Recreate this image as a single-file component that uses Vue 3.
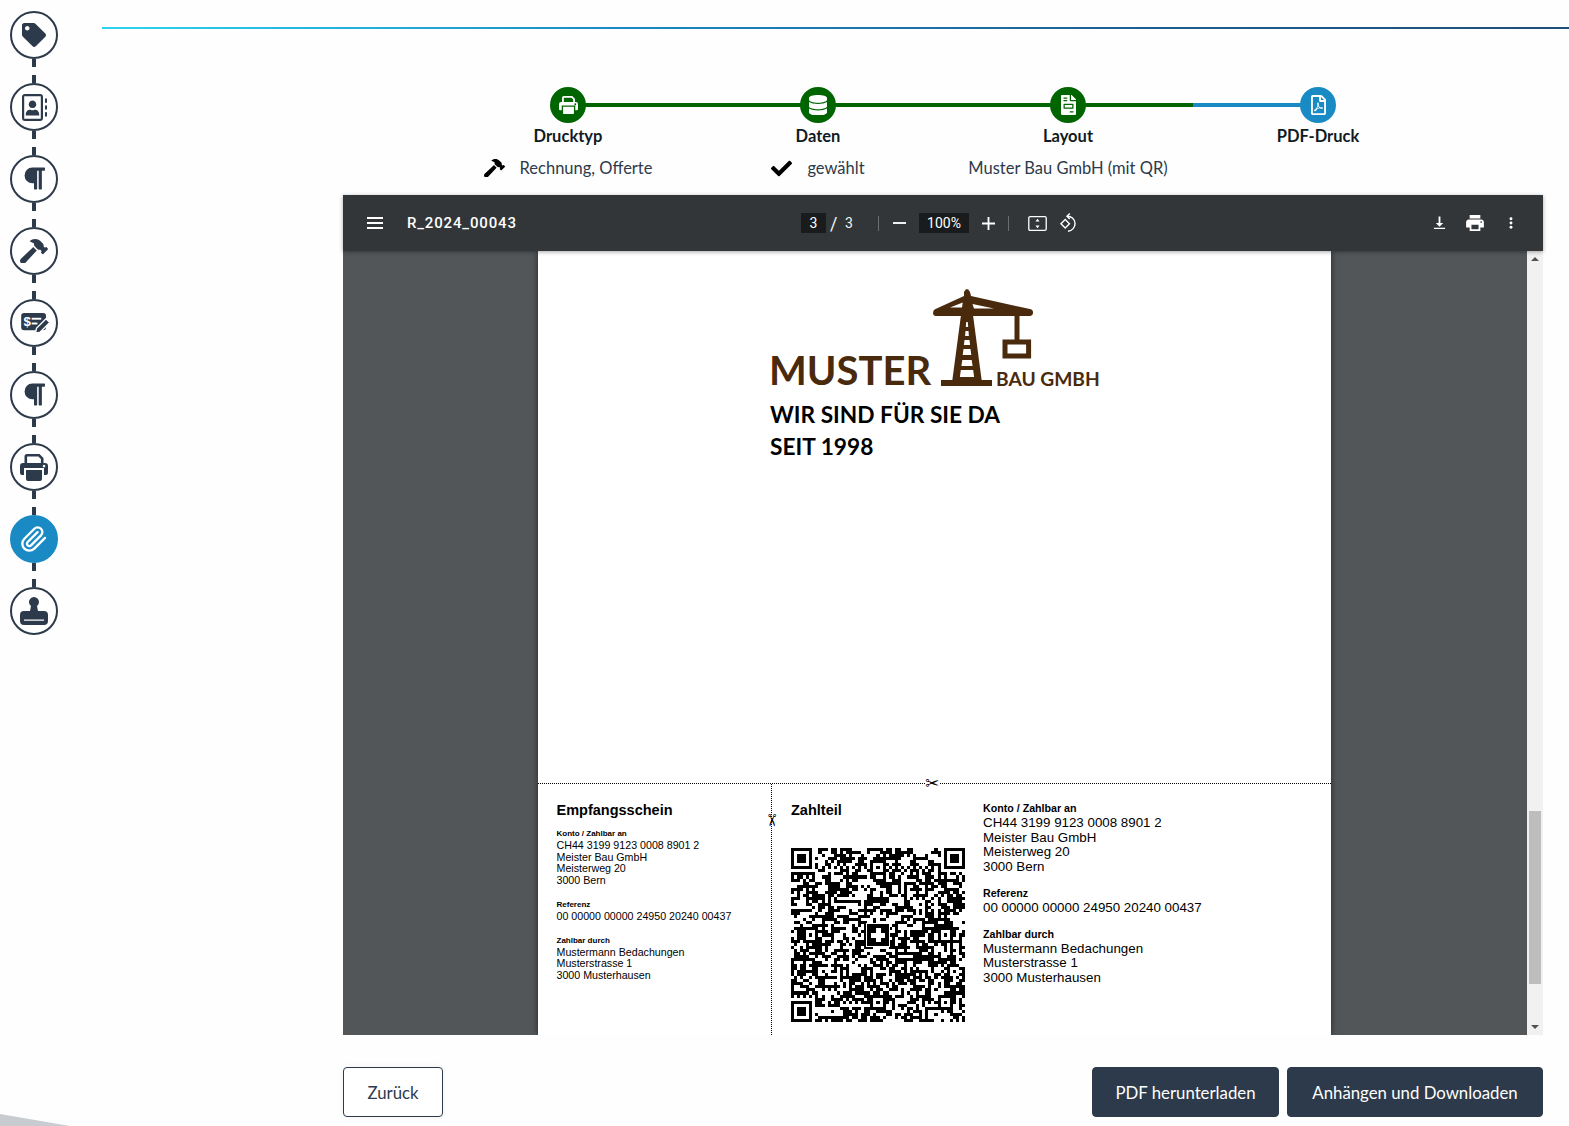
<script setup>
const icons = {
  tag: { vb: '0 0 512 512', w: 24, d: 'M0 252.118V48C0 21.49 21.49 0 48 0h204.118a48 48 0 0 1 33.941 14.059l211.882 211.882c18.745 18.745 18.745 49.137 0 67.882L293.823 497.941c-18.745 18.745-49.137 18.745-67.882 0L14.059 286.059A48 48 0 0 1 0 252.118zM112 64c-26.51 0-48 21.49-48 48s21.49 48 48 48 48-21.49 48-48-21.49-48-48-48z' },
  book: { vb: '0 0 25 27', w: 25, d: 'M3 0h15a3 3 0 0 1 3 3v21a3 3 0 0 1-3 3H3a3 3 0 0 1-3-3V3a3 3 0 0 1 3-3zM2.200 2.200v22.600h16.600V2.200zM10.500 6.500a3.800 3.800 0 1 1-.01 0zM3.800 20.500c0-3.500 2.500-4.800 4-4.800 1 0 1.500.6 2.700.6s1.700-.6 2.700-.6c1.500 0 4 1.300 4 4.800v1H3.800zM23 4.500h2v4.200h-2zM23 11.400h2v4.200h-2zM23 18.300h2v4.200h-2z' },
  para: { vb: '0 0 448 512', w: 22, d: 'M448 48v32a16 16 0 0 1-16 16h-48v368a16 16 0 0 1-16 16h-32a16 16 0 0 1-16-16V96h-32v368a16 16 0 0 1-16 16h-32a16 16 0 0 1-16-16V352h-32a160 160 0 0 1 0-320h240a16 16 0 0 1 16 16z' },
  hammer: { vb: '0 0 576 512', w: 28, d: 'M571.31 193.94l-22.63-22.63c-6.25-6.25-16.38-6.25-22.63 0l-11.31 11.31-28.9-28.9c5.63-21.31.36-44.9-16.35-61.61l-45.25-45.25c-62.48-62.48-163.79-62.48-226.28 0l90.51 45.25v18.75c0 16.97 6.74 33.25 18.75 45.25l49.14 49.14c16.71 16.71 40.3 21.98 61.61 16.35l28.9 28.9-11.31 11.31c-6.25 6.25-6.25 16.38 0 22.63l22.63 22.63c6.25 6.25 16.38 6.25 22.63 0l90.51-90.51c6.23-6.24 6.23-16.37-.02-22.62zm-286.72-15.2c-3.7-3.7-6.84-7.79-9.85-11.95L19.64 404.96c-25.57 23.88-26.26 64.19-1.53 88.93s65.05 24.05 88.93-1.53l238.13-255.07c-3.96-2.91-7.9-5.87-11.44-9.41l-49.14-49.14z' },
  print: { vb: '0 0 28 27', w: 28, d: 'M4.500 9V2.500A2.500 2.500 0 0 1 7 0h12.500l4 4v5h-2.600V5.100L18.400 2.600H7.100V9zM3 9h22a3 3 0 0 1 3 3v7a2 2 0 0 1-2 2h-2v-7H4v7H2a2 2 0 0 1-2-2v-7a3 3 0 0 1 3-3zM24 10.800a1.300 1.300 0 1 0 .01 0zM6 16h16v9a2 2 0 0 1-2 2H8a2 2 0 0 1-2-2z' },
  stamp: { vb: '0 -1 28 28', w: 28, d: 'M11 8A5 5 0 1 1 17 8l1 5h6a4 4 0 0 1 4 4v6a4 4 0 0 1-4 4H4a4 4 0 0 1-4-4v-6a4 4 0 0 1 4-4h6zM4 21.500v1.300h20v-1.300z' },
  db: { vb: '0 0 448 512', w: 18, d: 'M448 73.143v45.714C448 159.143 347.667 192 224 192S0 159.143 0 118.857V73.143C0 32.857 100.333 0 224 0s224 32.857 224 73.143zM448 176v102.857C448 319.143 347.667 352 224 352S0 319.143 0 278.857V176c48.125 33.143 136.208 48.572 224 48.572S399.874 209.143 448 176zm0 160v102.857C448 479.143 347.667 512 224 512S0 479.143 0 438.857V336c48.125 33.143 136.208 48.572 224 48.572S399.874 369.143 448 336z' },
  invoice: { vb: '0 0 384 512', w: 15, d: 'M377 105L279.1 7c-4.5-4.5-10.6-7-17-7H256v128h128v-6.1c0-6.3-2.5-12.4-7-16.9zm-153 31V0H24C10.7 0 0 10.7 0 24v464c0 13.3 10.7 24 24 24h336c13.3 0 24-10.7 24-24V160H248c-13.2 0-24-10.8-24-24zM64 72c0-4.42 3.58-8 8-8h80c4.42 0 8 3.58 8 8v16c0 4.42-3.58 8-8 8H72c-4.42 0-8-3.58-8-8V72zm0 64c0-4.42 3.58-8 8-8h80c4.42 0 8 3.58 8 8v16c0 4.42-3.58 8-8 8H72c-4.42 0-8-3.58-8-8v-16zm256 304c0 4.42-3.58 8-8 8h-80c-4.42 0-8-3.58-8-8v-16c0-4.42 3.58-8 8-8h80c4.42 0 8 3.58 8 8v16zm0-200v96c0 8.84-7.16 16-16 16H80c-8.84 0-16-7.16-16-16v-96c0-8.84 7.16-16 16-16h224c8.84 0 16 7.16 16 16zm-32 16H96v64h192v-64z' },
  pdf: { vb: '0 0 384 512', w: 15, d: 'M369.9 97.9L286 14C277 5 264.8-.1 252.1-.1H48C21.5 0 0 21.5 0 48v416c0 26.5 21.5 48 48 48h288c26.5 0 48-21.5 48-48V131.9c0-12.7-5.1-25-14.1-34zM332.1 128H256V51.9l76.1 76.1zM48 464V48h160v104c0 13.3 10.7 24 24 24h104v288H48zm250.2-143.7c-12.2-12-47-8.7-64.4-6.5-17.2-10.5-28.7-25-36.8-46.3 3.9-16.1 10.1-40.6 5.4-56-4.2-26.2-37.8-23.6-42.6-5.9-4.4 16.1-.4 38.5 7 67.1-10 23.9-24.9 56-35.4 74.4-20 10.3-47 26.2-51 46.2-3.3 15.8 26 55.2 76.1-31.2 22.4-7.4 46.8-16.5 68.4-20.1 18.9 10.2 41 17 55.8 17 25.5 0 28-28.2 17.5-38.7zm-198.1 77.8c5.1-13.7 24.5-29.5 30.4-35-19 30.3-30.4 35.7-30.4 35zm81.6-190.6c7.4 0 6.7 32.1 1.8 40.8-4.4-13.9-4.3-40.8-1.8-40.8zm-24.4 136.6c9.7-16.9 18-37 24.7-54.7 8.3 15.1 18.9 27.2 30.1 35.5-20.8 4.3-38.9 13.1-54.8 19.2zm131.6-5s-5 6-37.3-7.8c35.1-2.6 40.9 5.4 37.3 7.8z' },
  check: { vb: '0 0 512 512', w: 21, d: 'M173.898 439.404l-166.4-166.4c-9.997-9.997-9.997-26.206 0-36.204l36.203-36.204c9.997-9.998 26.207-9.998 36.204 0L192 312.69 432.095 72.596c9.997-9.997 26.207-9.997 36.204 0l36.203 36.204c9.997 9.997 9.997 26.206 0 36.204l-294.4 294.401c-9.998 9.997-26.207 9.997-36.204-.001z' }
}

const rail = [
  { icon: 'tag' }, { icon: 'book' }, { icon: 'para' }, { icon: 'hammer' }, { icon: 'check-edit' },
  { icon: 'para' }, { icon: 'print' }, { icon: 'clip', active: true }, { icon: 'stamp' }
]

const steps = [
  { icon: 'print', size: 19, label: 'Drucktyp', sub: 'Rechnung, Offerte', subIcon: 'hammer', tone: 'done' },
  { icon: 'db', size: 18, label: 'Daten', sub: 'gewählt', subIcon: 'check', tone: 'done' },
  { icon: 'invoice', size: 15, label: 'Layout', sub: 'Muster Bau GmbH (mit QR)', tone: 'done' },
  { icon: 'pdf', size: 15, label: 'PDF-Druck', sub: '', tone: 'current' }
]

const receipt = [
  { label: 'Konto / Zahlbar an', lines: ['CH44 3199 9123 0008 8901 2', 'Meister Bau GmbH', 'Meisterweg 20', '3000 Bern'] },
  { label: 'Referenz', lines: ['00 00000 00000 24950 20240 00437'] },
  { label: 'Zahlbar durch', lines: ['Mustermann Bedachungen', 'Musterstrasse 1', '3000 Musterhausen'] }
]

// Builds a QR-like module matrix: finder, timing and alignment patterns plus seeded noise.
function buildQr(n) {
  const m = Array.from({ length: n }, () => Array(n).fill(null))
  const finder = (r, c) => {
    for (let i = -1; i <= 7; i++) for (let j = -1; j <= 7; j++) {
      const y = r + i, x = c + j
      if (y < 0 || x < 0 || y >= n || x >= n) continue
      const ring = i >= 0 && i <= 6 && j >= 0 && j <= 6 && (i === 0 || i === 6 || j === 0 || j === 6)
      const core = i >= 2 && i <= 4 && j >= 2 && j <= 4
      m[y][x] = ring || core
    }
  }
  finder(0, 0); finder(0, n - 7); finder(n - 7, 0)
  for (let i = 8; i < n - 8; i++) { m[6][i] = i % 2 === 0; m[i][6] = i % 2 === 0 }
  const centres = [6, 28, 50]
  for (const r of centres) for (const c of centres) {
    if ((r === 6 && c === 6) || (r === 6 && c === 50) || (r === 50 && c === 6)) continue
    for (let i = -2; i <= 2; i++) for (let j = -2; j <= 2; j++) {
      m[r + i][c + j] = Math.max(Math.abs(i), Math.abs(j)) !== 1
    }
  }
  let s = 20240437
  const rnd = () => { s = (s * 1664525 + 1013904223) >>> 0; return (s >>> 16) / 65536 }
  for (let y = 0; y < n; y++) for (let x = 0; x < n; x++) {
    if (m[y][x] !== null) continue
    const near = (x > 0 && m[y][x - 1]) || (y > 0 && m[y - 1][x])
    m[y][x] = rnd() < (near ? 0.58 : 0.42)
  }
  let d = ''
  for (let y = 0; y < n; y++) for (let x = 0; x < n; x++) if (m[y][x]) d += `M${x} ${y}h1v1h-1z`
  return d
}
const qrPath = buildQr(57)
</script>

<template>
  <div class="app">
    <nav class="rail">
      <template v-for="(item, i) in rail" :key="i">
        <div class="rail-node" :class="{ active: item.active }">
          <svg v-if="item.icon === 'check-edit'" class="check-edit" viewBox="0 0 30 22" width="29" height="21">
            <rect x="0" y="0" width="26" height="18" rx="3" fill="currentColor" />
            <text x="2.5" y="14" class="dollar">$</text>
            <rect x="11" y="5" width="10" height="2" fill="#fff" />
            <rect x="11" y="10" width="6" height="2" fill="#fff" />
            <path d="M15 21l1-5 10-10 4 4-10 10z" fill="currentColor" stroke="#fff" stroke-width="1.4" />
          </svg>
          <svg v-else-if="item.icon === 'clip'" viewBox="0 0 24 24" width="28" height="28" fill="none" stroke="currentColor" stroke-width="2" stroke-linecap="round" stroke-linejoin="round">
            <path d="m21.44 11.05-9.19 9.19a6 6 0 0 1-8.49-8.49l8.57-8.57A4 4 0 1 1 18 8.84l-8.59 8.57a2 2 0 0 1-2.83-2.83l8.49-8.48" />
          </svg>
          <svg v-else :viewBox="icons[item.icon].vb" :width="icons[item.icon].w" fill="currentColor">
            <path :d="icons[item.icon].d" fill-rule="evenodd" />
          </svg>
        </div>
        <div v-if="i < rail.length - 1" class="rail-link"><span></span><span></span></div>
      </template>
    </nav>

    <main class="main">
      <div class="top-rule"></div>

      <ol class="steps">
        <li v-for="(s, i) in steps" :key="s.label" class="step">
          <span v-if="i < steps.length - 1" class="step-line" :class="{ split: i === 2 }"></span>
          <span class="step-dot" :class="s.tone">
            <svg :viewBox="icons[s.icon].vb" :width="s.size" fill="currentColor"><path :d="icons[s.icon].d" fill-rule="evenodd" /></svg>
          </span>
          <strong class="step-label">{{ s.label }}</strong>
          <span class="step-sub">
            <svg v-if="s.subIcon" :viewBox="icons[s.subIcon].vb" width="21" fill="#000"><path :d="icons[s.subIcon].d" /></svg>
            <span>{{ s.sub }}</span>
          </span>
        </li>
      </ol>

      <section class="viewer">
        <header class="toolbar">
          <div class="tb-left">
            <button class="tb-btn" aria-label="Menü">
              <svg viewBox="0 0 16 12" width="16" height="12" fill="#fff"><path d="M0 0h16v2H0zM0 5h16v2H0zM0 10h16v2H0z" /></svg>
            </button>
            <span class="tb-title">R_2024_00043</span>
          </div>
          <div class="tb-center">
            <span class="tb-page">3</span>
            <span class="tb-of"><i>/</i><span>3</span></span>
            <span class="tb-sep"></span>
            <button class="tb-btn minus" aria-label="Verkleinern">
              <svg viewBox="0 0 14 2" width="13" height="2" fill="#fff"><path d="M0 0h14v2H0z" /></svg>
            </button>
            <span class="tb-zoom">100%</span>
            <button class="tb-btn plus" aria-label="Vergrössern">
              <svg viewBox="0 0 14 14" width="13" height="13" fill="#fff"><path d="M6 0h2v6h6v2H8v6H6V8H0V6h6z" /></svg>
            </button>
            <span class="tb-sep second"></span>
            <button class="tb-btn fit" aria-label="Seite einpassen">
              <svg viewBox="0 0 20 16" width="19" height="15" fill="none" stroke="#fff" stroke-width="1.4">
                <rect x=".7" y=".7" width="18.6" height="14.6" rx="1.5" />
                <path d="M10 3l2.2 2.800H7.800zM10 13l2.200-2.800H7.800z" fill="#fff" stroke="none" />
              </svg>
            </button>
            <button class="tb-btn rotate" aria-label="Drehen">
              <svg viewBox="0 0 20 20" width="20" height="20" fill="none" stroke="#fff" stroke-width="1.4">
                <path d="M8 3.200a7.200 7.200 0 1 1 1 15" />
                <path d="M10.800.6 8 3.200l2.800 2.700" />
                <rect x="3.200" y="7.800" width="6" height="6" transform="rotate(45 6.200 10.800)" />
              </svg>
            </button>
          </div>
          <div class="tb-right">
            <button class="tb-btn" aria-label="Herunterladen">
              <svg viewBox="0 0 14 14" width="13" height="14" fill="#fff"><path d="M6 0h2v7h3L7 11 3 7h3zM1 12h12v1.400H1z" /></svg>
            </button>
            <button class="tb-btn" aria-label="Drucken">
              <svg viewBox="2 3 20 18" width="18" height="16" fill="#fff"><path d="M19 8H5c-1.660 0-3 1.340-3 3v6h4v4h12v-4h4v-6c0-1.660-1.340-3-3-3zm-3 11H8v-5h8v5zm3-7c-.55 0-1-.45-1-1s.45-1 1-1 1 .45 1 1-.45 1-1 1zm-1-9H6v4h12V3z" /></svg>
            </button>
            <button class="tb-btn" aria-label="Mehr">
              <svg viewBox="0 0 4 14" width="4" height="12" fill="#fff"><circle cx="2" cy="2" r="1.7" /><circle cx="2" cy="7" r="1.7" /><circle cx="2" cy="12" r="1.7" /></svg>
            </button>
          </div>
        </header>

        <div class="viewer-body">
          <div class="canvas">
            <article class="page">
              <div class="letterhead">
                <div class="logo">
                  <span class="logo-name">MUSTER</span>
                  <svg class="crane" viewBox="0 -2 100 101" width="100" height="101">
                    <g fill="#4a2a0c">
                      <path d="M31 3q3-6 6 0l1 4 60 13.300q2.400 1 2 3.900-.5 2.800-2.500 2.800H3q-2.800 0-3-3 0-2.700 2-3.700L31 7z" />
                      <path d="M28 26h12l8.700 65.500H19.300z" />
                      <rect x="8" y="91" width="51" height="6" />
                      <rect x="81.500" y="26" width="5" height="26" />
                    </g>
                    <rect x="72" y="53" width="23.600" height="14" fill="none" stroke="#4a2a0c" stroke-width="5" />
                    <g fill="#fff">
                      <path d="M17 18.500 29.700 13.500 29 18.500zM39.500 15 61 19.500H41z" />
                      <path d="M33.200 33h1.600l.4 5h-2.400zM32.500 42h3l.4 5h-3.800zM31.500 51h5l.6 5h-6.200zM30.500 60h7l.8 6h-8.600zM29.300 71h9.400l.9 6H28.400zM27.800 81h12.400l.9 7H26.900z" />
                    </g>
                  </svg>
                  <span class="logo-sub">BAU GMBH</span>
                </div>
                <p class="slogan">WIR SIND FÜR SIE DA</p>
                <p class="slogan">SEIT 1998</p>
              </div>

              <div class="slip">
                <span class="cut cut-h">✂</span>
                <span class="cut cut-v">✂</span>
                <section class="slip-receipt">
                  <h3 class="slip-title">Empfangsschein</h3>
                  <dl v-for="g in receipt" :key="g.label" class="group-s">
                    <dt>{{ g.label }}</dt>
                    <dd v-for="l in g.lines" :key="l">{{ l }}</dd>
                  </dl>
                </section>
                <section class="slip-pay">
                  <div class="slip-qr">
                    <h3 class="slip-title">Zahlteil</h3>
                    <div class="qr">
                      <svg viewBox="0 0 57 57" width="174" height="174" shape-rendering="crispEdges">
                        <path :d="qrPath" fill="#000" />
                      </svg>
                      <svg class="qr-cross" viewBox="0 0 24 24" width="24" height="24" shape-rendering="crispEdges">
                        <rect width="24" height="24" fill="#fff" />
                        <rect x="1" y="1" width="22" height="22" fill="#000" />
                        <path d="M9.500 5h5v4.500H19v5h-4.500V19h-5v-4.500H5v-5h4.500z" fill="#fff" />
                      </svg>
                    </div>
                  </div>
                  <div class="slip-info">
                    <dl v-for="g in receipt" :key="g.label" class="group-l">
                      <dt>{{ g.label }}</dt>
                      <dd v-for="l in g.lines" :key="l">{{ l }}</dd>
                    </dl>
                  </div>
                </section>
              </div>
            </article>
          </div>
          <div class="scrollbar">
            <span class="arrow up"></span>
            <span class="thumb"></span>
            <span class="arrow down"></span>
          </div>
        </div>
      </section>

      <footer class="actions">
        <button class="btn ghost">Zurück</button>
        <div class="actions-right">
          <button class="btn solid narrow">PDF herunterladen</button>
          <button class="btn solid wide">Anhängen und Downloaden</button>
        </div>
      </footer>
    </main>
    <div class="corner"></div>
  </div>
</template>

<style>
html, body { margin: 0; background: #fff; }
</style>

<style scoped>
.app {
  position: relative;
  display: flex;
  width: 1569px;
  height: 1126px;
  overflow: hidden;
  background: #fefefe;
  font-family: Lato, "Open Sans", sans-serif;
  color: #2d3a4b;
}
.rail {
  flex: 0 0 68px;
  display: flex;
  flex-direction: column;
  align-items: center;
  padding-top: 11px;
  color: #2d3a4b;
}
.rail-node {
  width: 48px;
  height: 48px;
  box-sizing: border-box;
  border: 2px solid #2d3a4b;
  border-radius: 50%;
  background: #fff;
  display: flex;
  align-items: center;
  justify-content: center;
  flex: none;
}
.rail-node.active {
  background: #1a8ac4;
  border-color: #1a8ac4;
  color: #fff;
}
.check-edit { margin-left: 2px; }
.dollar { font: 700 14px "Liberation Sans", sans-serif; fill: #fff; }
.rail-link {
  height: 24px;
  display: flex;
  flex-direction: column;
  justify-content: space-between;
  flex: none;
}
.rail-link span { display: block; width: 4px; height: 8px; background: #2d3a4b; }

.main { flex: 1; min-width: 0; display: flex; flex-direction: column; }
.top-rule {
  margin: 27px 0 0 34px;
  height: 2px;
  background: linear-gradient(90deg, #2dd4f0 0%, #1a8ac4 35%, #1c5f93 70%, #1f4e79 100%);
}
.steps {
  list-style: none;
  margin: 58px 0 0 375px;
  padding: 0;
  display: grid;
  grid-template-columns: repeat(4, 250px);
  height: 108px;
}
.step {
  position: relative;
  display: flex;
  flex-direction: column;
  align-items: center;
}
.step-line {
  position: absolute;
  left: 50%;
  top: 16px;
  width: 100%;
  height: 4px;
  background: #006400;
}
.step-line.split { background: linear-gradient(90deg, #006400 50%, #1a8ac4 50%); }
.step-dot {
  position: relative;
  width: 36px;
  height: 36px;
  border-radius: 50%;
  color: #fff;
  display: flex;
  align-items: center;
  justify-content: center;
}
.step-dot.done { background: #006400; }
.step-dot.current { background: #1a8ac4; }
.step-label {
  margin-top: 3px;
  font-size: 16.500px;
  line-height: 20px;
  font-weight: 700;
  color: #111a24;
}
.step-sub {
  margin-top: 12px;
  height: 20px;
  display: flex;
  align-items: center;
  gap: 15px;
  font-size: 16.500px;
  line-height: 20px;
}

.viewer { margin: 0 26px 0 275px; display: flex; flex-direction: column; }
.toolbar {
  position: relative;
  z-index: 1;
  height: 56px;
  background: #323639;
  color: #f1f3f4;
  display: grid;
  grid-template-columns: 1fr auto 1fr;
  align-items: center;
  font-family: Roboto, sans-serif;
  box-shadow: 0 1px 4px rgba(0, 0, 0, .35);
}
.tb-left { display: flex; align-items: center; padding-left: 14px; }
.tb-title { margin-left: 14px; font-size: 15px; font-weight: 500; letter-spacing: .85px; color: #fff; }
.tb-btn {
  width: 36px;
  height: 36px;
  padding: 0;
  border: 0;
  background: none;
  display: flex;
  align-items: center;
  justify-content: center;
}
.tb-center { display: flex; align-items: center; font-size: 14px; margin-left: -2px; }
.tb-page, .tb-zoom {
  height: 20px;
  line-height: 20px;
  text-align: center;
  background: #191b1c;
  color: #fff;
}
.tb-page { width: 25px; }
.tb-of { width: 52px; display: flex; align-items: center; }
.tb-of i { margin-left: 4px; width: 15px; font-size: 18px; font-style: normal; }
.tb-sep { width: 1px; height: 15px; background: #6a6e71; }
.tb-btn.minus { width: 40px; }
.tb-zoom { width: 50px; }
.tb-btn.plus { width: 38px; }
.tb-sep.second { margin-left: 1px; }
.tb-btn.fit { margin-left: 10px; }
.tb-btn.rotate { width: 28px; }
.tb-right { display: flex; justify-content: flex-end; padding-right: 14px; }

.viewer-body { height: 784px; display: flex; background: #525659; }
.canvas { flex: 1; min-width: 0; padding-right: 1px; display: flex; justify-content: center; overflow: hidden; }
.page {
  width: 793px;
  height: 784px;
  background: #fff;
  display: flex;
  flex-direction: column;
  box-shadow: 0 0 6px rgba(0, 0, 0, .55);
  color: #000;
}
.letterhead { padding: 36px 0 0 231px; font-family: Lato, sans-serif; }
.logo { display: flex; align-items: flex-end; height: 101px; color: #4a2a0c; }
.logo-name { font-size: 40px; line-height: 36px; font-weight: 700; width: 164px; white-space: nowrap; }
.logo-sub { font-size: 19.200px; line-height: 22px; font-weight: 700; margin-left: -37px; margin-bottom: -1.500px; white-space: nowrap; }
.crane { flex: none; }
.slogan { margin: 0 0 0 1px; font-size: 22.700px; line-height: 32px; font-weight: 700; color: #000; }
.slogan:first-of-type { margin-top: 11px; }
.slip {
  position: relative;
  margin-top: auto;
  height: 252px;
  box-sizing: border-box;
  border-top: 1px dotted #000;
  display: flex;
  font-family: "Liberation Sans", Arial, sans-serif;
}
.cut { position: absolute; font: 17px/16px "DejaVu Sans", sans-serif; background: #fff; }
.cut-h { left: 387px; top: -9px; }
.cut-v { left: 227px; top: 28px; transform: rotate(90deg); background: none; }
.slip-receipt {
  width: 234px;
  box-sizing: border-box;
  border-right: 1px dotted #000;
  padding: 18px 0 0 18.500px;
}
.slip-title { margin: 0; font-size: 14.500px; line-height: 17px; font-weight: 700; }
dl { margin: 0; }
dd { margin: 0; white-space: nowrap; }
.group-s { margin-top: 13px; }
.group-s:first-of-type { margin-top: 10px; }
.group-s dt { font-size: 8px; line-height: 10px; font-weight: 700; margin-bottom: 1px; }
.group-s dd { font-size: 10.670px; line-height: 11.700px; }
.slip-pay { flex: 1; display: flex; padding: 18px 0 0 19px; }
.slip-qr { width: 192px; flex: none; }
.qr { position: relative; margin-top: 29px; width: 174px; height: 174px; }
.qr svg { display: block; }
.qr-cross { position: absolute; left: 75px; top: 75px; }
.slip-info { padding-top: .4px; }
.group-l { margin-top: 12.500px; }
.group-l:first-child { margin-top: 0; }
.group-l dt { font-size: 10.670px; line-height: 12px; font-weight: 700; margin-bottom: 2px; }
.group-l dd { font-size: 13.330px; line-height: 14.500px; }

.scrollbar {
  position: relative;
  flex: 0 0 16px;
  background: #f1f1f1;
}
.thumb {
  position: absolute;
  left: 2px;
  right: 2px;
  top: 560px;
  height: 173px;
  background: #bdbdbd;
}
.arrow { position: absolute; left: 4px; width: 0; height: 0; border-left: 4px solid transparent; border-right: 4px solid transparent; }
.arrow.up { top: 6px; border-bottom: 4px solid #505050; }
.arrow.down { bottom: 6px; border-top: 4px solid #505050; }

.actions { margin: 32px 26px 0 275px; display: flex; justify-content: space-between; }
.actions-right { display: flex; gap: 8px; }
.btn {
  height: 50px;
  box-sizing: border-box;
  border-radius: 4px;
  font-family: Lato, sans-serif;
  font-size: 16.800px;
  padding: 0;
  border: 1px solid #2d3a4b;
}
.btn.ghost { width: 100px; background: #fff; color: #2d3a4b; box-shadow: 0 0 6px rgba(0, 0, 0, .06); }
.btn.solid { background: #2d3a4b; color: #fff; }
.btn.narrow { width: 187px; }
.btn.wide { width: 256px; }
.corner {
  position: absolute;
  left: 0;
  bottom: 0;
  width: 70px;
  height: 12px;
  background: #c8ccd0;
  clip-path: polygon(0 0, 100% 100%, 0 100%);
}
</style>
